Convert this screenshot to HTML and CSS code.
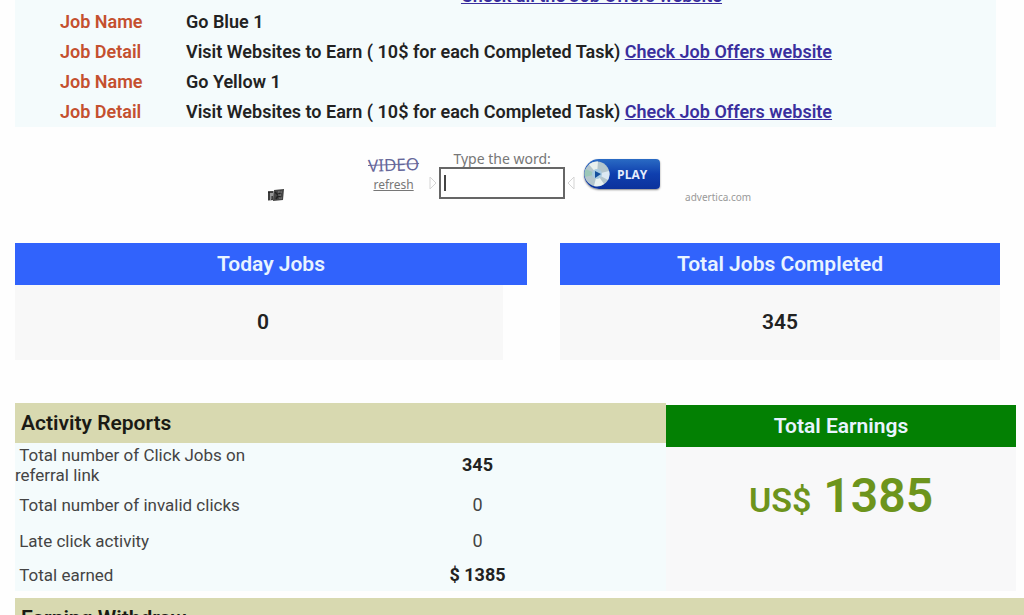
FILE: index.html
```html
<!DOCTYPE html>
<html lang="en">
<head>
    <meta charset="UTF-8">
    <meta name="viewport" content="width=device-width, initial-scale=1.0">
    <title>Job Dashboard</title>
    <link rel="stylesheet" href="styles.css">
</head>
<body>
    <section class="jobs">
        <div class="jobs-more"><a href="#">Check all the Job Offers website</a></div>
        <dl class="job-list">
            <dt>Job Name</dt>
            <dd>Go Blue 1</dd>
            <dt>Job Detail</dt>
            <dd>Visit Websites to Earn ( 10$ for each Completed Task) <a href="#">Check Job Offers website</a></dd>
            <dt>Job Name</dt>
            <dd>Go Yellow 1</dd>
            <dt>Job Detail</dt>
            <dd>Visit Websites to Earn ( 10$ for each Completed Task) <a href="#">Check Job Offers website</a></dd>
        </dl>
    </section>

    <form class="captcha">
        <svg class="captcha-mark" width="18" height="14" viewBox="0 0 18 14" aria-hidden="true">
            <path d="M1 4 L7 3 L7 12 L1 13 Z" fill="#999"/>
            <path d="M7 2 L17 1 L16 12 L6 13 Z" fill="#444"/>
            <path d="M1 4 H6 M2 4 V12 M5 8 V12 M8 4 L14 10 M14 3 L9 11" stroke="#222" stroke-width="1.5" fill="none"/>
            <path d="M11 4 H15 M11 7 H14 M12 10 H15 M4 8 V11" stroke="#888" fill="none"/>
        </svg>
        <div class="captcha-word">
            <span class="word">VIDEO</span>
            <a href="#" class="refresh">refresh</a>
        </div>
        <div class="captcha-entry">
            <label for="word">Type the word:</label>
            <div class="entry-row">
                <svg width="8" height="14" viewBox="0 0 8 14" aria-hidden="true"><path d="M1 1 L7 7 L1 13 Z" fill="none" stroke="#d4d4d4"/></svg>
                <div class="entry-box">
                    <input type="text" id="word">
                    <span class="caret"></span>
                </div>
                <svg width="8" height="14" viewBox="0 0 8 14" aria-hidden="true"><path d="M7 1 L1 7 L7 13 Z" fill="none" stroke="#d4d4d4"/></svg>
            </div>
        </div>
        <button type="button" class="play-btn">
            <svg width="26" height="28" viewBox="0 0 26 28" aria-hidden="true">
                <circle cx="13" cy="14" r="12.5" fill="#b4c6cc"/>
                <path d="M13 14 L5 4.500 A12.500 12.500 0 0 1 14 1.500 Z" fill="#e8f0ee"/>
                <path d="M13 14 L25 11 A12.500 12.500 0 0 1 24 20 Z" fill="#dce9f2"/>
                <path d="M13 14 L20 24 A12.500 12.500 0 0 1 10 26 Z" fill="#eaf2f0"/>
                <path d="M13 14 L1 17 A12.500 12.500 0 0 1 1.500 9 Z" fill="#9cc7b8"/>
                <circle cx="13" cy="14" r="5" fill="#a9cbe0"/>
                <path d="M11 11 L17 14 L11 18 Z" fill="#14509c"/>
            </svg>
            <span>PLAY</span>
        </button>
        <span class="captcha-source">advertica.com</span>
    </form>

    <section class="totals">
        <div class="total today">
            <h2>Today Jobs</h2>
            <p>0</p>
        </div>
        <div class="total">
            <h2>Total Jobs Completed</h2>
            <p>345</p>
        </div>
    </section>

    <section class="reports">
        <div class="activity">
            <h2 class="bar">Activity Reports</h2>
            <table>
                <tbody>
                    <tr class="two-line">
                        <th scope="row">&nbsp;Total number of Click Jobs on referral link</th>
                        <td><b>345</b></td>
                    </tr>
                    <tr>
                        <th scope="row">&nbsp;Total number of invalid clicks</th>
                        <td>0</td>
                    </tr>
                    <tr>
                        <th scope="row">&nbsp;Late click activity</th>
                        <td>0</td>
                    </tr>
                    <tr class="last">
                        <th scope="row">&nbsp;Total earned</th>
                        <td><b>$ 1385</b></td>
                    </tr>
                </tbody>
            </table>
        </div>
        <div class="earnings">
            <h2>Total Earnings</h2>
            <p><span class="currency">US$</span> 1385</p>
        </div>
    </section>

    <h2 class="bar">Earning Withdraw</h2>
</body>
</html>
```
FILE: styles.css
```css
body {
    margin: 0;
    padding-left: 15px;
    background: #fefefe;
    color: #222;
    font-family: Roboto, sans-serif;
    overflow: hidden;
}
h2, p, dl, dd {
    margin: 0;
}
a {
    color: #3a2f9e;
}
.jobs {
    margin-right: 28px;
    background: #f4fbfc;
    font-size: 18px;
    font-weight: 600;
}
/* tail end of the previous job entry */
.jobs-more {
    display: flex;
    align-items: flex-end;
    justify-content: center;
    height: 6px;
    padding: 0 0 1px 172px;
    overflow: hidden;
}
.job-list {
    display: grid;
    grid-template-columns: 126px 1fr;
    padding-left: 45px;
    line-height: 30px;
}
.job-list dt {
    color: #c4502f;
}
.captcha {
    display: flex;
    align-items: flex-start;
    height: 92px;
    padding: 24px 0 0 252px;
    color: #777;
    font-family: "Noto Sans", sans-serif;
}
.captcha-mark {
    margin-top: 37px;
}
.captcha-word {
    display: flex;
    flex-direction: column;
    align-items: center;
    margin: 4px 10px 0 83px;
}
.word {
    color: #66679a;
    font-size: 17px;
    line-height: 20px;
    text-decoration: line-through;
    transform: rotate(-2deg);
}
.refresh {
    color: #777;
    font-size: 12px;
    line-height: 20px;
}
.captcha-entry {
    display: flex;
    flex-direction: column;
    align-items: center;
}
.captcha-entry label {
    font-size: 14px;
    line-height: 16px;
}
.entry-row {
    display: flex;
    align-items: center;
    gap: 2px;
}
.entry-box {
    position: relative;
    display: flex;
}
.entry-box input {
    box-sizing: border-box;
    width: 126px;
    height: 32px;
    padding: 0 4px;
    border: 2px solid #666;
    background: #fff;
    font: 18px Roboto, sans-serif;
    outline: none;
}
.caret {
    position: absolute;
    top: 8px;
    left: 5px;
    width: 2px;
    height: 16px;
    background: #444;
    pointer-events: none;
}
.entry-box input:focus + .caret {
    display: none;
}
.play-btn {
    display: flex;
    align-items: center;
    gap: 7px;
    width: 76px;
    height: 30px;
    margin: 8px 25px 0 9px;
    padding: 0;
    border: none;
    border-radius: 15px 4px 4px 15px;
    background: linear-gradient(#2a6bc4, #0f3fae 50%, #0b329c);
    box-shadow: 0 1px 2px #888;
    color: #e6eefc;
    font: bold 12px "Open Sans", sans-serif;
}
.captcha-source {
    margin-top: 38px;
    color: #999;
    font-size: 10px;
    line-height: 16px;
}
.totals {
    display: grid;
    grid-template-columns: 512fr 440fr;
    gap: 33px;
    margin-right: 24px;
    text-align: center;
    font-size: 21px;
    font-weight: 600;
}
.total h2,
.earnings h2 {
    background: #3163fc;
    color: #e8f4ff;
    font-size: 21px;
    font-weight: 600;
    line-height: 42px;
}
.total p {
    padding: 22px 0;
    background: #f8f8f8;
    line-height: 31px;
}
.today p {
    margin-right: 24px;
    padding-left: 8px;
}
.reports {
    display: grid;
    grid-template-columns: 651fr 350fr;
    margin: 43px 8px 7px 0;
}
.bar {
    padding-left: 6px;
    background: #d8d9b0;
    color: #1a1a14;
    font-size: 21px;
    font-weight: 600;
    line-height: 40px;
}
.activity table {
    width: 100%;
    border-collapse: collapse;
    background: #f4fbfc;
    color: #444;
    font-size: 17px;
    line-height: 20px;
}
.activity th,
.activity td {
    height: 36px;
    padding: 0;
}
.activity th {
    width: 250px;
    padding-right: 24px;
    font-weight: 400;
    text-align: left;
}
.activity td {
    text-align: center;
    font-size: 18px;
}
.activity b {
    color: #222;
    font-weight: 700;
}
.activity .two-line th,
.activity .two-line td {
    height: 44px;
}
.activity .last th,
.activity .last td {
    height: 32px;
}
.earnings {
    margin-top: 2px;
    background: #f8f8f9;
    text-align: center;
}
.earnings h2 {
    background: #038003;
}
.earnings p {
    padding: 24px 0;
    color: #6d941c;
    font-size: 48px;
    font-weight: 600;
    line-height: 50px;
}
.currency {
    font-size: 34px;
}
```
